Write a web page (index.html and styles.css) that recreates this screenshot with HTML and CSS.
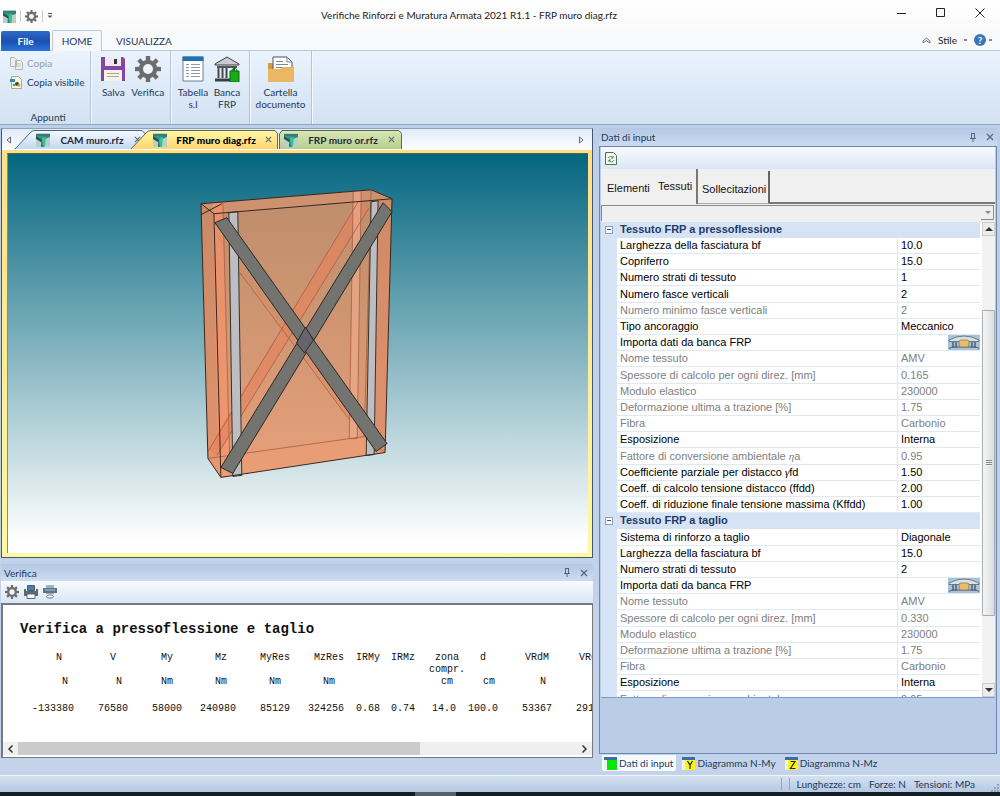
FILE: index.html
```html
<!DOCTYPE html>
<html lang="it">
<head>
<meta charset="utf-8">
<title>Verifiche Rinforzi e Muratura Armata</title>
<link rel="stylesheet" href="styles.css">
</head>
<body>
<svg class="defs" width="0" height="0" aria-hidden="true">
  <defs>
    <linearGradient id="teal" x1="0" y1="0" x2="1" y2="1"><stop offset="0" stop-color="#4f9f93"/><stop offset="1" stop-color="#1d6b62"/></linearGradient>
    <linearGradient id="tabBlue" x1="0" y1="0" x2="0" y2="1"><stop offset="0" stop-color="#f4f9ff"/><stop offset="1" stop-color="#c3d8f2"/></linearGradient>
    <linearGradient id="tabGold" x1="0" y1="0" x2="0" y2="1"><stop offset="0" stop-color="#fff8a8"/><stop offset="1" stop-color="#ffd56c"/></linearGradient>
    <linearGradient id="tabGreen" x1="0" y1="0" x2="0" y2="1"><stop offset="0" stop-color="#d9e7b4"/><stop offset="1" stop-color="#b7cd8e"/></linearGradient>
    <linearGradient id="wall" x1="0" y1="0" x2="0" y2="1"><stop offset="0" stop-color="#bd8d6b"/><stop offset="1" stop-color="#e6a07a"/></linearGradient>
    <symbol id="app" viewBox="0 0 14 14"><rect width="14" height="14" fill="#b9cfc8"/><path d="M0 1h14v3l-5 2v8H5V7L0 4z" fill="url(#teal)"/><path d="M0 1h14v2H0z" fill="#2f8177"/><path d="M6 5l4-1-1 10H7z" fill="#36c29a"/><path d="M0 3l6 4-1 2-5-3z" fill="#1c5750"/></symbol>
    <symbol id="gear" viewBox="-12 -12 24 24"><g fill="#6d6d6d"><path d="M-2-12h4v24h-4z"/><path d="M-2-12h4v24h-4z" transform="rotate(45)"/><path d="M-2-12h4v24h-4z" transform="rotate(90)"/><path d="M-2-12h4v24h-4z" transform="rotate(135)"/></g><circle r="6.6" fill="none" stroke="#6d6d6d" stroke-width="4"/><circle r="4.6" fill="#f0f5fb"/></symbol>
    <symbol id="pin" viewBox="0 0 8 9"><path d="M2 .5h4M2.500 1v4M5.500 1v4M1 5.500h6M4 6v3" stroke="#55657d" fill="none"/></symbol>
    <symbol id="cross" viewBox="0 0 8 8"><path d="M1 1l6 6M7 1L1 7" stroke="#5d6778" stroke-width="1.300" fill="none"/></symbol>
    <symbol id="bankrow" viewBox="0 0 32 15"><rect width="32" height="15" fill="#a9c3dd"/><path d="M1 5Q16-3 31 5v1.500H1z" fill="#d7e1e8" stroke="#55616b" stroke-width=".8"/><path d="M5 7v6M8 7v6M24 7v6M27 7v6" stroke="#3d4a57" stroke-width="1.200"/><path d="M1 13.500l3-1.500h24l3 1.500" stroke="#4d5a66" fill="none"/><rect x="11" y="5" width="10" height="7" rx="2" fill="#e8bd72" stroke="#8a6d3a" stroke-width=".7"/></symbol>
  </defs>
</svg>

<header class="titlebar">
  <div class="quick">
    <svg width="13" height="13"><use href="#app"/></svg><i class="bar"></i>
    <button aria-label="Verifica rapida"><svg width="13" height="13"><use href="#gear"/></svg></button><i class="bar"></i>
    <button aria-label="Personalizza"><svg width="6" height="6" viewBox="0 0 6 6"><path d="M1 .5h4" stroke="#555"/><path d="M.5 2.500h5L3 5z" fill="#555"/></svg></button>
  </div>
  <h1>Verifiche Rinforzi e Muratura Armata 2021 R1.1 - FRP muro diag.rfz</h1>
  <div class="winbtns">
    <button aria-label="Riduci"><svg width="10" height="10"><path d="M0 5.500h9" stroke="#222"/></svg></button>
    <button aria-label="Ingrandisci"><svg width="10" height="10"><path d="M.5.5h8v8h-8z" stroke="#222" fill="none"/></svg></button>
    <button aria-label="Chiudi"><svg width="10" height="10"><path d="M.5.5l9 9M9.500.5l-9 9" stroke="#222" fill="none"/></svg></button>
  </div>
</header>

<nav class="ribbon-tabs">
  <button class="file">File</button>
  <button class="home">HOME</button>
  <button class="view">VISUALIZZA</button>
  <div class="style-box">
    <svg width="9" height="7" viewBox="0 0 9 7"><path d="M1 4l3.500-3L8 4v2L4.500 3.500 1 6z" fill="#fff" stroke="#555" stroke-width=".8"/></svg>
    <button>Stile</button><i class="dot"></i>
    <button class="help" aria-label="Aiuto">?</button><i class="dot"></i>
  </div>
</nav>

<section class="ribbon">
  <div class="group clip">
    <button class="small off"><svg width="13" height="13" viewBox="0 0 13 13"><path d="M.5.5h4l2 2v7h-6zM5.500 3.500h5l2 2v7h-7z" fill="#eee" stroke="#b5b5b5"/><path d="M7 7h4M7 9h4" stroke="#c4c4c4"/></svg>Copia</button>
    <button class="small"><svg width="13" height="13" viewBox="0 0 13 13"><path d="M1.500.5h7l3 3v9h-10z" fill="#f7f7ea" stroke="#a9a98c"/><rect x="0" y="3" width="5" height="3" fill="#3e87a5"/><circle cx="7" cy="8" r="2" fill="#3c4632"/><circle cx="9" cy="9" r="1.500" fill="#d8a020"/><circle cx="4" cy="9" r="1.300" fill="#63a343"/></svg>Copia visibile</button>
    <span class="caption">Appunti</span>
  </div>
  <div class="group pair">
    <button class="big"><svg width="26" height="26" viewBox="0 0 26 26"><path d="M1 1h22l2 2v22H1z" fill="#8445a3"/><path d="M5 1h16v9H5z" fill="#eee9f0"/><path d="M14 3h3v5h-3z" fill="#333"/><path d="M4 14h18v11H4z" fill="#f4f1e6"/><path d="M7 17.500h12M7 20.500h12" stroke="#a8a89a"/></svg>Salva</button>
    <button class="big"><svg width="26" height="26"><use href="#gear"/></svg>Verifica</button>
  </div>
  <div class="group pair">
    <button class="big"><svg width="22" height="26" viewBox="0 0 22 26"><path d="M1 1h20v24H1z" fill="#fff" stroke="#6f7f8c"/><path d="M.5.5h21V5H.5z" fill="#2170ae"/><path d="M4 8.500h3M4 11.500h3M4 14.500h3M4 17.500h3M4 20.500h3M9 8.500h9M9 11.500h9M9 14.500h9M9 17.500h9M9 20.500h9" stroke="#8b9aa8"/></svg>Tabella<br>s.l</button>
    <button class="big"><svg width="26" height="26" viewBox="0 0 26 26"><path d="M1 8L13 1l12 7v1H1z" fill="#c9cdd0" stroke="#3b3f43"/><path d="M3 10h20v2H3z" fill="#555"/><path d="M4.500 12v10M8.500 12v10M12.500 12v10M20 12v4" stroke="#44494e" stroke-width="2"/><path d="M1 24h24" stroke="#3b3f43" stroke-width="3"/><path d="M16 15h9v11h-9z" fill="#17ab17" stroke="#087008"/><path d="M18 15c0-4 5-4 5 0" fill="none" stroke="#087008"/></svg>Banca<br>FRP</button>
  </div>
  <div class="group single">
    <button class="big"><svg width="26" height="26" viewBox="0 0 26 26"><path d="M0 7h10v6H0z" fill="#d59a45"/><path d="M5 1h14l5 5v12H5z" fill="#fff" stroke="#555"/><path d="M19 1v5h5M8 5.500h7M8 8.500h12M8 11.500h12" fill="none" stroke="#7389a0"/><path d="M0 13h12l3-2h11v15H0z" fill="#ecb765"/></svg>Cartella<br>documento</button>
  </div>
</section>

<main class="work">
  <div class="left">
    <section class="viewer">
      <div class="doc-tabs">
        <button class="arrow" aria-label="Scheda precedente"><svg width="5" height="8" viewBox="0 0 5 8"><path d="M4.500 1v6L1 4z" fill="none" stroke="#667"/></svg></button>
        <button class="doc first"><svg class="shape" viewBox="0 0 130 19" preserveAspectRatio="none"><path d="M0 19L15 3Q17 .5 20 .5H127l3 3V19" fill="url(#tabBlue)" stroke="#4f6375"/></svg><svg class="ico" width="14" height="14"><use href="#app"/></svg><span>CAM muro.rfz</span><svg class="x" width="7" height="7"><use href="#cross"/></svg></button>
        <button class="doc current"><svg class="shape" viewBox="0 0 147 19" preserveAspectRatio="none"><path d="M0 19L15 3Q17 .5 20 .5H144l2.500 3V19" fill="url(#tabGold)" stroke="#6a6440"/></svg><svg class="ico" width="14" height="14"><use href="#app"/></svg><span>FRP muro diag.rfz</span><svg class="x" width="7" height="7"><use href="#cross"/></svg></button>
        <button class="doc last"><svg class="shape" viewBox="0 0 123 19" preserveAspectRatio="none"><path d="M.5 19V4L3 .5H120l2.500 3V19" fill="url(#tabGreen)" stroke="#5a6a48"/></svg><svg class="ico" width="14" height="14"><use href="#app"/></svg><span>FRP muro or.rfz</span><svg class="x" width="7" height="7"><use href="#cross"/></svg></button>
        <button class="arrow end" aria-label="Scheda successiva"><svg width="5" height="8" viewBox="0 0 5 8"><path d="M.5 1v6L4 4z" fill="none" stroke="#667"/></svg></button>
      </div>
      <div class="frame">
        <svg class="scene" viewBox="7 153 581 401" role="img" aria-label="Modello 3D del muro">
          <path d="M200 203L371 189 392 198 385 453 220 478 207 459z" fill="url(#wall)"/>
          <path d="M200 203L213 213 220 478 207 459z" fill="#d9855f" opacity=".45"/>
          <path d="M213 213L392 198 371 189 200 203z" fill="#d99673" opacity=".55"/>
          <path d="M377 199L392 198 385 453 375 455z" fill="#de8763" opacity=".55"/>
          <path d="M212 202H222L229 465 217 456z" fill="#f5936c" opacity=".7"/>
          <path d="M358 201L369 207 216 456 207 450z" fill="#e5835c" opacity=".65"/>
          <path d="M353 191L361 190 357 438 349 439z" fill="#eca98c" opacity=".7"/>
          <path d="M202 213L349 412V420L208 225z" fill="#dc835d" opacity=".35"/>
          <path d="M207 459L364 437 385 453 220 478z" fill="#ef9b72" opacity=".5"/>
          <g fill="none" stroke="#a85e40" stroke-width=".8"><path d="M358 201L207 452M369 207L216 456M207 459L364 437 385 453M371 189L364 437M353 191L349 439H357L361 190M222 202L229 465M239 272L349 420"/></g>
          <path d="M228 212L237 211 241 476 232 477z" fill="#bdbec2" stroke="#33302e"/>
          <path d="M371 201L378 200 374 455 366 456z" fill="#bdbec2" stroke="#33302e"/>
          <path d="M200 203L371 189 392 198 385 453 220 478 207 459zM200 203L213 213 392 198M213 213L220 478M221 203L200 214" fill="none" stroke="#3b251c"/>
          <path d="M383 202L392 211 232 474 220 468z" fill="#73736f" stroke="#292725"/>
          <path d="M214 222L226 217 387 444 376 452z" fill="#73736f" stroke="#292725"/>
          <path d="M296 343L305 327 313 340 304 353z" fill="#66666a" stroke="#292725"/>
        </svg>
      </div>
    </section>

    <section class="check">
      <div class="panel-head"><h2>Verifica</h2><button aria-label="Blocca"><svg width="8" height="9"><use href="#pin"/></svg></button><button aria-label="Chiudi pannello"><svg width="8" height="8"><use href="#cross"/></svg></button></div>
      <div class="toolbar">
        <button aria-label="Esegui verifica"><svg width="14" height="14"><use href="#gear"/></svg></button>
        <button aria-label="Stampa"><svg width="14" height="14" viewBox="0 0 14 14"><path d="M3.500.5h7v5h-7z" fill="#fff" stroke="#555"/><path d="M4 1h6v4H4z" fill="#3f83b8"/><path d="M0 4h2v2h10V4h2v7H0z" fill="#5c6872"/><path d="M3 9h8v4.500H3z" fill="#fff" stroke="#5c6872"/></svg></button>
        <button aria-label="Anteprima di stampa"><svg width="14" height="14" viewBox="0 0 14 14"><path d="M3 0h8v3H3z" fill="#9cb3c2"/><path d="M0 3h14v5H0z" fill="#5f7584"/><path d="M2 5h10" stroke="#9fc4da"/><path d="M3 8h8v1H3z" fill="#aaa"/><ellipse cx="7" cy="11.500" rx="3.500" ry="1.600" fill="#fff" stroke="#6e7780"/></svg></button>
      </div>
      <div class="report">
        <div class="sheet">
          <h3>Verifica a pressoflessione e taglio</h3>
          <table>
            <colgroup><col class="w"><col class="w"><col class="w"><col class="w"><col class="w"><col class="w"><col class="s"><col class="s"><col class="m"><col class="m"><col class="w"><col class="w"></colgroup>
            <thead>
              <tr><th>N</th><th>V</th><th>My</th><th>Mz</th><th>MyRes</th><th>MzRes</th><th class="r">IRMy</th><th class="r">IRMz</th><th>zona<br>compr.</th><th class="p">d</th><th>VRdM</th><th>VRdS</th></tr>
              <tr class="units"><th class="n">N</th><th class="n">N</th><th>Nm</th><th>Nm</th><th>Nm</th><th>Nm</th><th></th><th></th><th>cm</th><th>cm</th><th class="n">N</th><th></th></tr>
            </thead>
            <tbody><tr><td>-133380</td><td>76580</td><td>58000</td><td>240980</td><td>85129</td><td>324256</td><td>0.68</td><td>0.74</td><td>14.0</td><td>100.0</td><td>53367</td><td>29153</td></tr></tbody>
          </table>
        </div>
        <div class="hscroll">
          <button aria-label="Scorri a sinistra"><svg width="5" height="8"><path d="M4.500.5L1 4l3.500 3.500" fill="none" stroke="#333" stroke-width="1.500"/></svg></button>
          <div class="track"><div class="thumb"></div></div>
          <button aria-label="Scorri a destra"><svg width="5" height="8"><path d="M.5.5L4 4 .5 7.500" fill="none" stroke="#333" stroke-width="1.500"/></svg></button>
        </div>
      </div>
    </section>
  </div>

  <aside class="right">
    <div class="panel-head"><h2>Dati di input</h2><button aria-label="Blocca pannello"><svg width="8" height="9"><use href="#pin"/></svg></button><button aria-label="Chiudi dati di input"><svg width="8" height="8"><use href="#cross"/></svg></button></div>
    <div class="inner">
      <div class="toolbar"><button aria-label="Aggiorna"><svg width="12" height="13" viewBox="0 0 12 13"><path d="M.5.5h8l3 3v9H.5z" fill="#f4f8f2" stroke="#54705a"/><path d="M3 6c1-2 4-2 5 0M9 8c-1 2.500-4 2.500-5 0M8 4v2H6M4 10V8h2" fill="none" stroke="#3f8c4d"/></svg></button></div>
      <div class="tabs"><button>Elementi</button><button class="on">Tessuti</button><button class="edge">Sollecitazioni</button><i></i></div>
      <div class="combo"><select aria-label="Elemento"><option></option></select><svg width="13" height="14" viewBox="0 0 13 14"><path d="M0 13.500h12.500V0" fill="none" stroke="#888"/><path d="M4 5h6L7 8z" fill="#888"/></svg></div>
      <div class="props">
        <div class="list">
          <table>
            <colgroup><col class="gut"><col><col class="val"></colgroup>
            <tbody>
              <tr class="cat"><th><button class="fold" aria-label="Comprimi"></button></th><th colspan="2">Tessuto FRP a pressoflessione</th></tr>
              <tr><td></td><td>Larghezza della fasciatura bf</td><td>10.0</td></tr>
              <tr><td></td><td>Copriferro</td><td>15.0</td></tr>
              <tr><td></td><td>Numero strati di tessuto</td><td>1</td></tr>
              <tr><td></td><td>Numero fasce verticali</td><td>2</td></tr>
              <tr class="ro"><td></td><td>Numero minimo fasce verticali</td><td>2</td></tr>
              <tr><td></td><td>Tipo ancoraggio</td><td>Meccanico</td></tr>
              <tr><td></td><td>Importa dati da banca FRP</td><td><button class="bank" aria-label="Importa"><svg width="32" height="15"><use href="#bankrow"/></svg></button></td></tr>
              <tr class="ro"><td></td><td>Nome tessuto</td><td>AMV</td></tr>
              <tr class="ro"><td></td><td>Spessore di calcolo per ogni direz. [mm]</td><td>0.165</td></tr>
              <tr class="ro"><td></td><td>Modulo elastico</td><td>230000</td></tr>
              <tr class="ro"><td></td><td>Deformazione ultima a trazione [%]</td><td>1.75</td></tr>
              <tr class="ro"><td></td><td>Fibra</td><td>Carbonio</td></tr>
              <tr><td></td><td>Esposizione</td><td>Interna</td></tr>
              <tr class="ro"><td></td><td>Fattore di conversione ambientale <em>η</em>a</td><td>0.95</td></tr>
              <tr><td></td><td>Coefficiente parziale per distacco <em>γ</em>fd</td><td>1.50</td></tr>
              <tr><td></td><td>Coeff. di calcolo tensione distacco (ffdd)</td><td>2.00</td></tr>
              <tr><td></td><td>Coeff. di riduzione finale tensione massima (Kffdd)</td><td>1.00</td></tr>
              <tr class="cat"><th><button class="fold" aria-label="Comprimi"></button></th><th colspan="2">Tessuto FRP a taglio</th></tr>
              <tr><td></td><td>Sistema di rinforzo a taglio</td><td>Diagonale</td></tr>
              <tr><td></td><td>Larghezza della fasciatura bf</td><td>15.0</td></tr>
              <tr><td></td><td>Numero strati di tessuto</td><td>2</td></tr>
              <tr><td></td><td>Importa dati da banca FRP</td><td><button class="bank" aria-label="Importa"><svg width="32" height="15"><use href="#bankrow"/></svg></button></td></tr>
              <tr class="ro"><td></td><td>Nome tessuto</td><td>AMV</td></tr>
              <tr class="ro"><td></td><td>Spessore di calcolo per ogni direz. [mm]</td><td>0.330</td></tr>
              <tr class="ro"><td></td><td>Modulo elastico</td><td>230000</td></tr>
              <tr class="ro"><td></td><td>Deformazione ultima a trazione [%]</td><td>1.75</td></tr>
              <tr class="ro"><td></td><td>Fibra</td><td>Carbonio</td></tr>
              <tr><td></td><td>Esposizione</td><td>Interna</td></tr>
              <tr class="ro"><td></td><td>Fattore di conversione ambientale <em>η</em>a</td><td>0.95</td></tr>
            </tbody>
          </table>
        </div>
        <div class="vscroll">
          <button aria-label="Scorri su"><svg width="8" height="5"><path d="M0 4h8L4 0z" fill="#333"/></svg></button>
          <div class="track"><div class="thumb"><i></i></div></div>
          <button aria-label="Scorri giù"><svg width="8" height="5"><path d="M0 0h8L4 4z" fill="#333"/></svg></button>
        </div>
      </div>
      <div class="blank"></div>
    </div>
    <div class="bottom-tabs">
      <button class="on"><svg width="13" height="13" viewBox="0 0 13 13"><path d="M0 0h13v13H0z" fill="#e9f3e9"/><path d="M3 3h10v10H3z" fill="#0be50b"/><path d="M0 0h13v3H0z" fill="#3a6ea5"/></svg>Dati di input</button>
      <button><svg width="13" height="13" viewBox="0 0 13 13"><path d="M0 0h13v13H0z" fill="#f3f3da"/><path d="M3 3h10v10H3z" fill="#fbf51a"/><path d="M0 0h13v3H0z" fill="#3a6ea5"/><path d="M5.500 4L8 8l2.500-4M8 8v4" fill="none" stroke="#222" stroke-width="1.200"/></svg>Diagramma N-My</button>
      <button><svg width="13" height="13" viewBox="0 0 13 13"><path d="M0 0h13v13H0z" fill="#f3f3da"/><path d="M3 3h10v10H3z" fill="#fbf51a"/><path d="M0 0h13v3H0z" fill="#3a6ea5"/><path d="M5.500 4.500h4.500l-4.500 7h5" fill="none" stroke="#222" stroke-width="1.200"/></svg>Diagramma N-Mz</button>
    </div>
  </aside>
</main>

<footer class="status"><i></i><i></i><span>Lunghezze: cm</span><span>Forze: N</span><span>Tensioni: MPa</span><svg width="8" height="8" viewBox="0 0 8 8"><path d="M6 0h2v2H6zM6 3h2v2H6zM6 6h2v2H6zM3 3h2v2H3zM3 6h2v2H3zM0 6h2v2H0z" fill="#8fa5c4"/></svg></footer>
<div class="taskbar"><i></i></div>
</body>
</html>
```

FILE: styles.css
```css
* { box-sizing: border-box; }
html, body { height: 100%; margin: 0; }
body { display: flex; flex-direction: column; overflow: hidden; font: 10px/12px Lato, "Open Sans", sans-serif; color: #1e395b; background: #c3d4ea; }
button { border: 0; margin: 0; padding: 0; background: none; font: inherit; color: inherit; display: flex; align-items: center; }
h1, h2, h3 { margin: 0; font-weight: 400; font-size: 10px; }
svg { display: block; flex: none; }
.defs { position: absolute; }

.titlebar { display: flex; align-items: center; height: 30px; padding: 0 15px 0 3px; background: linear-gradient(#fff, #fafafa); color: #222; }
.titlebar h1 { flex: 1; text-align: center; padding: 0 42px 0 0; }
.quick { display: flex; align-items: center; gap: 4px; width: 80px; padding-top: 2px; }
.quick .bar { width: 1px; height: 12px; background: #ccc; }
.winbtns { display: flex; gap: 29px; padding-bottom: 4px; }

.ribbon-tabs { display: flex; height: 21px; padding-left: 1px; background: #f8f9fa; border-bottom: 1px solid #b9c9de; }
.ribbon-tabs > button { justify-content: center; margin-bottom: -1px; }
.file { width: 49px; margin-top: 1px; background: linear-gradient(#2f6bc8, #1b4fb0 50%, #2a74dc); color: #fff; font-weight: 700; border-radius: 2px 2px 0 0; }
.home { width: 50px; margin-left: 2px; background: #f4f8fd; border: 1px solid #b9c9de; border-bottom: 0; border-radius: 2px 2px 0 0; }
.view { margin-left: 14px; }
.style-box { display: flex; align-items: center; gap: 7px; margin-left: auto; padding-right: 8px; color: #222; }
.style-box .help { justify-content: center; width: 12px; height: 12px; border-radius: 50%; background: #3876b8; color: #fff; font-weight: 700; }
.dot { width: 3px; height: 2px; background: #888; }
.help + .dot { margin-left: -4px; }

.ribbon { display: flex; height: 74px; background: linear-gradient(#ebf3fd, #dbe8f6 60%, #d3e1f1); border-bottom: 1px solid #93a7c2; }
.group { display: flex; border-right: 1px solid #b4c5da; box-shadow: 1px 0 #f5f9fe; padding: 5px 5px 0; }
.clip { flex-direction: column; width: 91px; padding: 4px 4px 1px 10px; }
.small { gap: 4px; height: 19px; padding-bottom: 3px; white-space: nowrap; }
.off { color: #949da8; }
.caption { margin-top: auto; text-align: center; }
.pair { width: 80px; }
.pair + .pair { width: 79px; }
.single { width: 62px; justify-content: center; padding: 5px 0 0; }
.big { flex-direction: column; flex: 1; justify-content: flex-start; }
.big svg { margin-bottom: 4px; }

.work { flex: 1; min-height: 0; display: flex; gap: 6px; padding: 3px 3px 0 1px; background: linear-gradient(#bccfe8, #c3d4ea); }
.left { flex: 592; min-width: 0; display: flex; flex-direction: column; gap: 6px; }
.viewer { flex: 1; min-height: 0; display: flex; flex-direction: column; border: 1px solid #44586b; border-top-color: #8da3bd; background: #f1f6fc; }
.doc-tabs { display: flex; height: 21px; padding-top: 1px; background: linear-gradient(#dfeafa, #fff); color: #1f2a3a; }
.arrow { width: 13px; justify-content: center; }
.arrow.end { margin-left: auto; width: 22px; }
.doc { position: relative; height: 19px; font-weight: 700; }
.doc > * { position: relative; }
.doc .shape { position: absolute; top: 0; left: 0; width: 100%; height: 100%; }
.doc span { flex: 1; text-align: center; }
.first { width: 130px; padding: 0 4px 0 21px; }
.current { width: 147px; margin-left: -14px; padding: 0 6px 0 22px; color: #000; font-weight: 900; }
.last { width: 123px; margin-left: 1px; padding: 0 7px 0 5px; }
.frame { flex: 1; min-height: 0; padding: 3px 4px 4px 5px; background: linear-gradient(#ffdf88, #fff9a2); }
.scene { width: 100%; height: 100%; border-top: 1px solid #55653f; border-left: 1px solid #8a8a7a; background: linear-gradient(#04667f, #fff 97%); }

.panel-head { display: flex; align-items: center; gap: 9px; height: 17px; padding: 0 5px 0 3px; background: linear-gradient(#b4c8e4, #cbdcf3); }
.panel-head h2 { flex: 1; }
.toolbar { display: flex; align-items: center; gap: 5px; height: 22px; padding: 0 4px; background: linear-gradient(#f8fbff, #d9e6f6); }
.check { margin-bottom: 17px; }
.report { height: 155px; display: flex; flex-direction: column; border: 2px solid #76797e; border-width: 2px 1px 1px 2px; background: #fff; color: #111; }
.sheet { flex: 1; overflow: hidden; padding: 15px 0 0 17px; font: 10px/12px "Liberation Mono", monospace; }
.sheet h3 { font: 700 14px/18px "Liberation Mono", monospace; }
.sheet table { table-layout: fixed; width: 562px; margin: 14px 0 0 12px; border-collapse: collapse; }
.sheet .w { width: 54px; }
.sheet .s { width: 35px; }
.sheet .m { width: 42px; }
.sheet th { padding: 0; font-weight: 400; vertical-align: top; text-align: center; white-space: nowrap; }
.sheet td { padding: 15px 12px 0 0; text-align: right; }
.sheet th.r { text-align: right; padding-right: 12px; }
.sheet th.p { padding-right: 12px; }
.sheet th.n { padding-left: 12px; }
.hscroll { display: flex; height: 13px; margin-bottom: 2px; background: #efefef; }
.hscroll button { width: 15px; justify-content: center; }
.hscroll .track { flex: 1; }
.hscroll .thumb { width: 72%; height: 100%; background: #cbcbcb; }

.right { flex: 398; min-width: 0; display: flex; flex-direction: column; }
.right .panel-head { height: 18px; padding: 0 3px 0 2px; }
.inner { flex: 1; min-height: 0; display: flex; flex-direction: column; border: 1px solid #6d88b0; padding: 0 1px; background: #b9cde6; }
.right .toolbar { height: 22px; padding: 0 4px; }
.tabs { display: flex; align-items: stretch; height: 35px; background: #f0f0f0; font: 11px/13px "Liberation Sans", Arial, sans-serif; color: #111; }
.tabs button { padding: 4px 0 0 6px; width: 52px; border-bottom: 0; }
.tabs .on { width: 45px; padding: 0 0 0 5px; border-right: 2px solid #777; }
.tabs .edge { width: 72px; padding-left: 4px; border-right: 2px solid #666; border-bottom: 1px solid #aaa; margin-top: 2px; }
.tabs i { flex: 1; border-bottom: 2px solid #777; }
.combo { position: relative; height: 18px; background: #f0f0f0; padding: 1px 1px 0 0; }
.combo select { appearance: none; display: block; width: 100%; height: 16px; border: 1px solid #888; border-width: 1px 0 0 1px; border-radius: 0; background: #efefef; }
.combo svg { position: absolute; right: 1px; top: 2px; }
.props { flex: 476; min-height: 0; display: flex; gap: 2px; background: #fff; border-bottom: 1px solid #7e9cc4; }
.list { flex: 1; min-width: 0; overflow: hidden; font: 11px/15px "Liberation Sans", Arial, sans-serif; color: #000; }
.list table { width: 100%; table-layout: fixed; border-collapse: separate; border-spacing: 0; }
.list tr { height: 16px; }
.list tr:nth-child(5n) { height: 17px; }
.list td, .list th { padding: 0 0 0 3px; text-align: left; white-space: nowrap; border-bottom: 1px solid #dfe9f0; }
.list td:first-child, .list th { background: #d6e3f4; border-bottom-color: #d6e3f4; }
.list th { font-weight: 700; color: #1d3b68; }
.list td + td + td { border-left: 1px solid #dfe9f0; }
.list em { font-family: "Liberation Serif", serif; }
.gut { width: 16px; }
.val { width: 83px; }
.list .ro { color: #808080; }
.fold { width: 8px; height: 8px; margin: 1px; border: 1px solid #8da0ba; background: linear-gradient(#3f5878, #3f5878) center / 4px 1px no-repeat #fff; }
.bank { margin-left: auto; }
.vscroll { display: flex; flex-direction: column; width: 13px; background: #f2f2f2; }
.vscroll > button { height: 14px; justify-content: center; background: #ececec; border: 1px solid #ccc; }
.vscroll .track { flex: 1; display: flex; flex-direction: column; justify-content: flex-end; padding-bottom: 67px; }
.vscroll .thumb { height: 306px; display: flex; align-items: center; justify-content: center; background: linear-gradient(90deg, #f5f5f5, #dadde0); border: 1px solid #a7adb5; border-radius: 1px; }
.thumb i { width: 6px; height: 6px; background: repeating-linear-gradient(#888 0 1px, #eee 1px 2px); }
.blank { flex: 55; background: #b9cde6; }
.bottom-tabs { display: flex; gap: 4px; height: 21px; padding: 1px 0 4px 3px; }
.bottom-tabs button { gap: 2px; padding: 0 3px 0 2px; white-space: nowrap; }
.bottom-tabs .on { background: #f6faff; border-radius: 0 0 2px 2px; }

.status { display: flex; align-items: center; gap: 8px; height: 17px; padding: 0 1px 0 0; border-top: 1px solid #eef4fb; background: linear-gradient(#d5e1f0, #b4c8e2); }
.status i { width: 1px; height: 12px; margin-right: -1px; background: #8fa5c4; }
.status i:first-child { margin-left: auto; }
.status svg { align-self: flex-end; margin-left: 8px; }
.taskbar { height: 4px; background: #141c24; display: flex; justify-content: center; }
.taskbar i { width: 41px; margin-right: 130px; background: #56616a; }
```
